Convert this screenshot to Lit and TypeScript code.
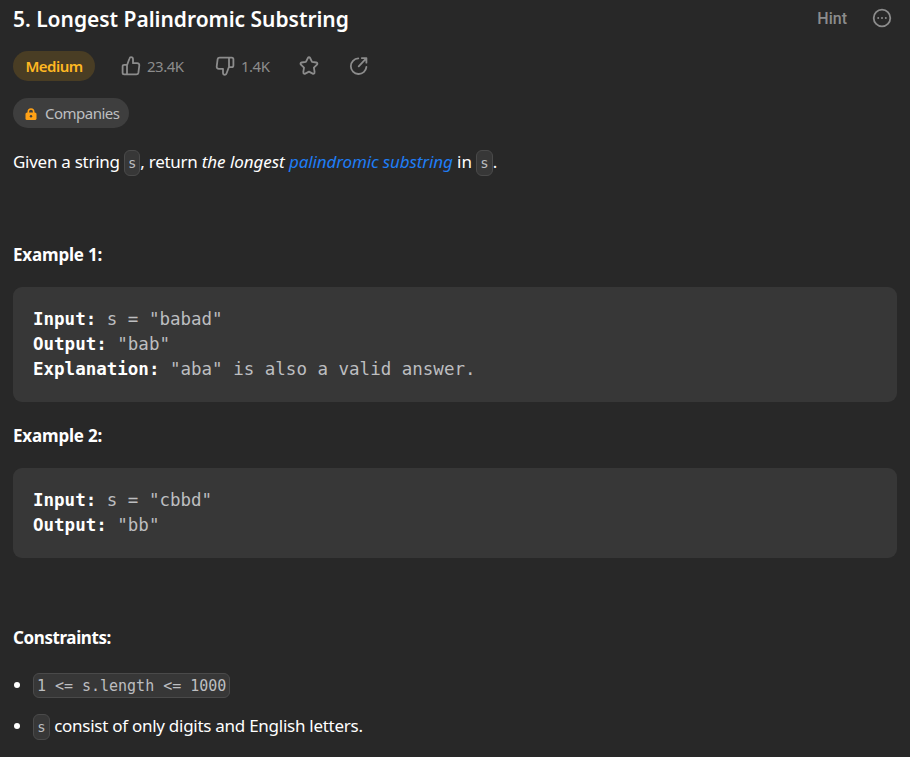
import { LitElement, html, css, svg } from "lit";
import { customElement } from "lit/decorators.js";

const icon = (body: unknown, cls = "") => html`<svg class="icon ${cls}" viewBox="0 0 20 20">${body}</svg>`;

const thumb = svg`<path d="M6.200 8.800 8.300 3C8.700 1.700 9.200 1.200 10 1.200c1.300 0 2 .9 2 2.100v3.900h4.200c1.500 0 2.200 1 2.100 2.300l-.9 7.200c-.2 1-.9 1.600-2 1.600H3.200c-1 0-1.600-.6-1.600-1.600v-6.300c0-1 .6-1.600 1.600-1.600h3zM6 9v9.300"/>`;
const star = svg`<path d="M8.900 2c.5-1 1.700-1 2.200 0l1.900 3.900 4.300.6c1.100.2 1.500 1.400.7 2.200l-3.100 3 .7 4.500c.2 1.100-.9 1.900-1.900 1.400L10 15.600l-3.800 2c-1 .5-2.100-.3-1.900-1.400l.7-4.500-3.100-3c-.8-.8-.4-2 .7-2.200l4.300-.6z"/>`;
const share = svg`<path d="M9.300 2.400a7.800 7.800 0 1 0 8.100 8.500M9.700 10.300l7.300-7.600M12.800 2.100h4.600v4.600"/>`;
const more = svg`<circle cx="10" cy="10" r="8.300"/><path class="dots" d="M6.200 10h.01M10 10h.01M13.800 10h.01"/>`;
const lock = svg`<path d="M3.300 6V4.700a2.700 2.700 0 0 1 5.400 0V6" class="shackle"/><rect x=".5" y="5.400" width="11" height="7.600" rx="1.600"/><circle class="hole" cx="6" cy="9.200" r="1.200"/>`;

@customElement("app-root")
export class AppRoot extends LitElement {
  static styles = css`
    :host { display: block; box-sizing: border-box; height: 757px; overflow: hidden; padding: 0 13px; background: #282828; color: #fff;
      font-family: "Noto Sans", "Open Sans", sans-serif; font-size: 17px; }
    .head { display: flex; justify-content: space-between; align-items: center; height: 38px; }
    .title { font-size: 21px; font-weight: 600; letter-spacing: -0.030px; }
    .tools { display: flex; align-items: center; gap: 25px; padding: 0 5px 2px 0; color: #8c8c8c; }
    .hint { font-family: Roboto, sans-serif; font-size: 16px; font-weight: 500; }
    .icon { width: 20px; height: 20px; fill: none; stroke: currentColor; stroke-width: 1.800; stroke-linecap: round; stroke-linejoin: round; display: block; }
    .flip { transform: rotate(180deg); }
    .dots { stroke-width: 2; }
    .stats { display: flex; align-items: center; height: 30px; margin-top: 13px; color: #8c8c8c; font-size: 15px; letter-spacing: -0.500px; }
    .pill { display: flex; align-items: center; justify-content: center; height: 30px; border-radius: 15px; }
    .medium { width: 82px; background: #493d24; color: #ffb822; font-size: 15px; font-weight: 600; letter-spacing: -0.550px; margin-right: 26px; }
    .stat { display: flex; align-items: center; gap: 6px; }
    .likes { width: 94px; } .dislikes { width: 84px; } .fav { width: 50px; }
    .companies { box-sizing: border-box; width: 116px; justify-content: flex-start; padding-left: 12px; margin-top: 17px; gap: 8px; background: #3e3e3e; color: #bdbec0; font-size: 15px; letter-spacing: -0.500px; }
    .lock { width: 12px; height: 13px; fill: #ffa116; }
    .shackle { fill: none; stroke: #ffa116; stroke-width: 1.600; }
    .hole { fill: #3e3e3e; }
    .line { display: flex; align-items: center; height: 26px; white-space: pre; }
    .line > span, .line > i { margin-top: -2px; }
    .intro { margin-top: 22px; }
    .intro > span, .intro > i { margin-top: -4px; }
    .tight { letter-spacing: -0.270px; }
    .link { color: #1f7df5; letter-spacing: -0.120px; }
    .lead { letter-spacing: -0.060px; }
    .label { font-weight: 700; letter-spacing: -0.180px; }
    .first { margin-top: 66px; } .second { margin-top: 21px; } .third { margin-top: 67px; letter-spacing: -0.400px; }
    code, pre { font-family: "DejaVu Sans Mono", monospace; }
    code { box-sizing: border-box; height: 26px; line-height: 25px; padding: 0 3px; border: 1px solid #4a4a4a; border-radius: 6px; background: #373737; color: #bdbec0; font-size: 14px; }
    pre { margin: 19px 0 0; padding: 20px; border-radius: 9px; background: #373737; color: #bdbec0; font-size: 17.500px; line-height: 25px; }
    pre b { color: #fff; }
    ul { margin: 21px 0 0; padding: 0; list-style: none; display: grid; gap: 15px; }
    li::before { content: ""; width: 6px; height: 6px; border-radius: 50%; background: #fff; margin: 0 13px 0 1px; }
    li .short { margin-top: 2px; padding: 0 3.300px; }
    .long { font-size: 15px; height: 25px; line-height: 24px; letter-spacing: -0.020px; }
  `;

  render() {
    return html`
      <div class="head">
        <span class="title">5. Longest Palindromic Substring</span>
        <div class="tools"><span class="hint">Hint</span>${icon(more)}</div>
      </div>
      <div class="stats">
        <div class="pill medium"><span>Medium</span></div>
        <div class="stat likes">${icon(thumb)}<span>23.4K</span></div>
        <div class="stat dislikes">${icon(thumb, "flip")}<span>1.4K</span></div>
        <div class="fav">${icon(star)}</div>
        ${icon(share)}
      </div>
      <div class="pill companies"><svg class="lock" viewBox="0 0 12 13">${lock}</svg><span>Companies</span></div>
      <div class="line intro"><span class="tight">Given a string </span><code>s</code><span class="tight">, return </span><i class="lead">the longest </i><i class="link">palindromic substring</i><span> in </span><code>s</code><span>.</span></div>
      <div class="line label first"><span>Example 1:</span></div>
      <pre><b>Input:</b> s = "babad"
<b>Output:</b> "bab"
<b>Explanation:</b> "aba" is also a valid answer.</pre>
      <div class="line label second"><span>Example 2:</span></div>
      <pre><b>Input:</b> s = "cbbd"
<b>Output:</b> "bb"</pre>
      <div class="line label third"><span>Constraints:</span></div>
      <ul>
        <li class="line"><code class="long">1 &lt;= s.length &lt;= 1000</code></li>
        <li class="line"><code class="short">s</code><span class="tight"> consist of only digits and English letters.</span></li>
      </ul>`;
  }
}
